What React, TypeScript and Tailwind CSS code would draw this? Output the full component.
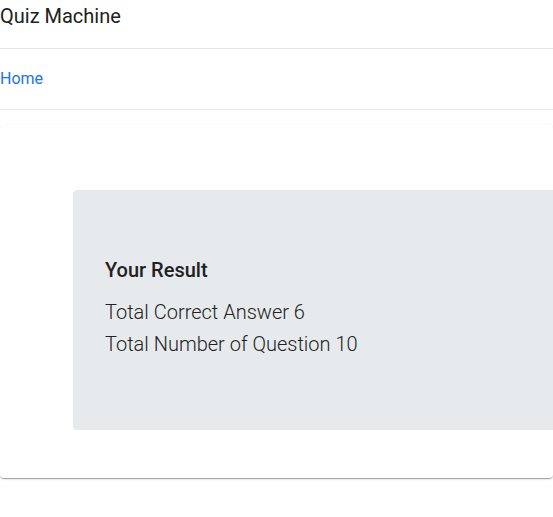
import React from 'react';

export default function App() {
  return (
    <div className="w-[553px] h-[517px] overflow-hidden bg-white font-['Roboto',sans-serif]">
      {/* Header */}
      <div className="h-[49px] border-b border-[#e5e5e5] pt-[2px]">
        <h1 className="text-[20px] leading-7 font-normal text-[#212121]">Quiz Machine</h1>
      </div>

      {/* Nav */}
      <div className="h-[61px] flex items-center border-b border-[#e5e5e5]">
        <a href="#" className="text-[16px] text-[#1a73e8] leading-5">Home</a>
      </div>

      {/* Result card */}
      <div className="mt-[15px] rounded bg-white pt-[65px] pb-[48px] shadow-[0_2px_1px_-1px_rgba(0,0,0,0.2),0_1px_1px_0_rgba(0,0,0,0.14),0_1px_3px_0_rgba(0,0,0,0.12)] flex">
        <div className="ml-[73px] w-[560px] shrink-0 h-[240px] rounded bg-[#e7eaed] pl-8 pt-[66px]">
          <h2 className="text-[20px] leading-7 font-medium text-[#212121] mb-[12px]">Your Result</h2>
          <p className="text-[20px] leading-8 font-light text-[#212121]">Total Correct Answer 6</p>
          <p className="text-[20px] leading-8 font-light text-[#212121]">Total Number of Question 10</p>
        </div>
      </div>
    </div>
  );
}
